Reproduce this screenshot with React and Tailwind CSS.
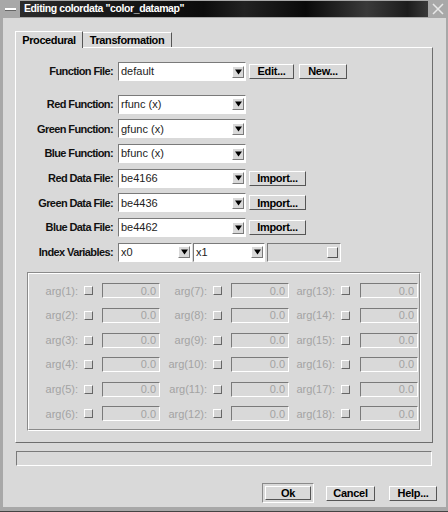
import React from "react";

const raised = "border border-t-white border-l-white border-b-[#7a7a7a] border-r-[#7a7a7a]";
const sunken = "border border-t-[#7a7a7a] border-l-[#7a7a7a] border-b-white border-r-white";

function Arrow() {
  return (
    <div className={`w-[12px] h-[12px] bg-[#d9d9d9] flex items-center justify-center ${raised}`}>
      <svg width="7" height="6" viewBox="0 0 7 6">
        <path d="M0 0.5 H7 L3.5 5.5 Z" fill="#000" />
      </svg>
    </div>
  );
}

function Combo({ value, w }) {
  return (
    <div className={`flex items-center h-[19px] ${sunken}`}>
      <div className="h-full bg-white flex items-center pl-[2px] text-[11px] text-[#222]" style={{ width: w }}>
        {value}
      </div>
      <div className="w-[14px] h-full flex items-center justify-center bg-white">
        <Arrow />
      </div>
    </div>
  );
}

function Btn({ children, w, h = 15 }) {
  return (
    <div
      className={`bg-[#d9d9d9] flex items-center justify-center font-bold text-[11px] tracking-[-0.3px] ${raised} border-b-[#555] border-r-[#555]`}
      style={{ width: w, height: h }}
    >
      {children}
    </div>
  );
}

function Label({ children }) {
  return (
    <div className="w-[100px] pr-[3px] text-right font-bold text-[11px] tracking-[-0.6px] text-[#111] whitespace-nowrap">
      {children}
    </div>
  );
}

function Row({ label, value, children, className = "" }) {
  return (
    <div className={`flex items-center h-[19px] ${className}`}>
      <Label>{label}</Label>
      <div className="ml-[2px]">
        <Combo value={value} w={112} />
      </div>
      {children}
    </div>
  );
}

function ArgCell({ n, lw, fm = 9 }) {
  return (
    <>
      <div className="text-right text-[11px] text-[#a3a3a3] whitespace-nowrap" style={{ width: lw }}>
        arg({n}):
      </div>
      <div className="ml-[6px] w-[9px] h-[9px] bg-[#d4d4d4] border border-t-white border-l-white border-b-[#666] border-r-[#666]" />
      <div
        className={`w-[58px] h-[15px] flex items-center justify-end pr-[3px] text-[11px] text-[#a3a3a3] ${sunken}`}
        style={{ marginLeft: fm }}
      >
        0.0
      </div>
    </>
  );
}

export default function App() {
  const rows = [1, 2, 3, 4, 5, 6];
  return (
    <div className="w-[448px] h-[512px] bg-[#a8a8a8] flex flex-col overflow-hidden font-['Liberation_Sans',Arial,sans-serif] text-black">
      <div className="h-[18px] flex items-stretch pt-[1px] pb-[1px]">
        <div className="w-[20px] flex items-center justify-center">
          <div className="w-[11px] h-[3px] bg-white border-b border-[#666]" />
        </div>
        <div className="flex-1 flex items-center pl-[4px] text-white font-bold text-[10.5px] tracking-[-0.4px] bg-[linear-gradient(90deg,#2c2c2c_0%,#1a1a1a_20%,#0c0c0c_45%,#222_55%,#0a0a0a_70%,#3a3a3a_85%,#1c1c1c_95%,#3a3a3a_100%)]">
          Editing colordata "color_datamap"
        </div>
        <div className="w-[20px] flex items-center justify-center">
          <svg width="12" height="12" viewBox="0 0 12 12">
            <path d="M1 1 L11 11 M11 1 L1 11" stroke="#e8e8e8" strokeWidth="1.5" />
          </svg>
        </div>
      </div>

      <div className="flex-1 ml-[3px] mr-[2px] mb-[4px] bg-[#d9d9d9] flex flex-col pl-[12px] pt-[12px]">
        <div className="flex items-end h-[17px]">
          <div className="w-[68px] h-[17px] bg-[#d9d9d9] border-t border-l border-white border-r border-r-[#555] flex items-center justify-center font-bold text-[11px] tracking-[-0.4px] relative z-10 -mb-px">
            Procedural
          </div>
          <div className="w-[89px] h-[15px] bg-[#d9d9d9] border-t border-white border-r border-r-[#555] flex items-center justify-center font-bold text-[11px] tracking-[-0.4px]">
            Transformation
          </div>
        </div>

        <div className="w-[418px] h-[396px] border border-t-white border-l-white border-b-[#6e6e6e] border-r-[#6e6e6e] flex flex-col pt-[14px]">
          <Row label="Function File:" value="default">
            <div className="ml-[3px]">
              <Btn w={45}>Edit...</Btn>
            </div>
            <div className="ml-[5px]">
              <Btn w={48}>New...</Btn>
            </div>
          </Row>
          <div className="flex flex-col gap-[5.7px] mt-[13.7px]">
            <Row label="Red Function:" value="rfunc (x)" />
            <Row label="Green Function:" value="gfunc (x)" />
            <Row label="Blue Function:" value="bfunc (x)" />
            <Row label="Red Data File:" value="be4166">
              <div className="ml-[3px]">
                <Btn w={57}>Import...</Btn>
              </div>
            </Row>
            <Row label="Green Data File:" value="be4436">
              <div className="ml-[3px]">
                <Btn w={57}>Import...</Btn>
              </div>
            </Row>
            <Row label="Blue Data File:" value="be4462">
              <div className="ml-[3px]">
                <Btn w={57}>Import...</Btn>
              </div>
            </Row>
            <div className="flex items-center h-[19px]">
              <Label>Index Variables:</Label>
              <div className="ml-[2px]">
                <Combo value="x0" w={58} />
              </div>
              <div className="ml-[1px]">
                <Combo value="x1" w={56} />
              </div>
              <div className={`ml-[2px] w-[74px] h-[19px] flex items-center justify-end pr-[2px] ${sunken}`}>
                <div className={`w-[11px] h-[11px] bg-[#d9d9d9] ${raised} border-b-[#555] border-r-[#555]`} />
              </div>
            </div>
          </div>

          <div className="ml-[11px] mt-[10.5px] w-[394px] h-[159px] border border-t-[#8a8a8a] border-l-[#8a8a8a] border-b-white border-r-white">
            <div className="w-full h-full border border-t-white border-l-white border-b-[#8a8a8a] border-r-[#8a8a8a] flex flex-col pt-[9px] gap-[9.6px]">
              {rows.map((r) => (
                <div key={r} className="flex items-center h-[15px]">
                  <ArgCell n={r} lw={49} />
                  <ArgCell n={r + 6} lw={47} />
                  <ArgCell n={r + 12} lw={46} fm={10} />
                </div>
              ))}
            </div>
          </div>
        </div>

        <div className={`ml-[1px] mt-[8px] w-[416px] h-[15px] ${sunken}`} />

        <div className="flex items-center mt-[17px] h-[20px]">
          <div className="ml-[247px] w-[52px] h-[20px] border border-t-[#8a8a8a] border-l-[#8a8a8a] border-b-white border-r-white p-[2px]">
            <Btn w={46} h={14}>Ok</Btn>
          </div>
          <div className="ml-[12px]">
            <Btn w={49} h={15}>Cancel</Btn>
          </div>
          <div className="ml-[14px]">
            <Btn w={48} h={15}>Help...</Btn>
          </div>
        </div>
      </div>
      <div className="h-0 border-t border-[#444]" />
    </div>
  );
}
